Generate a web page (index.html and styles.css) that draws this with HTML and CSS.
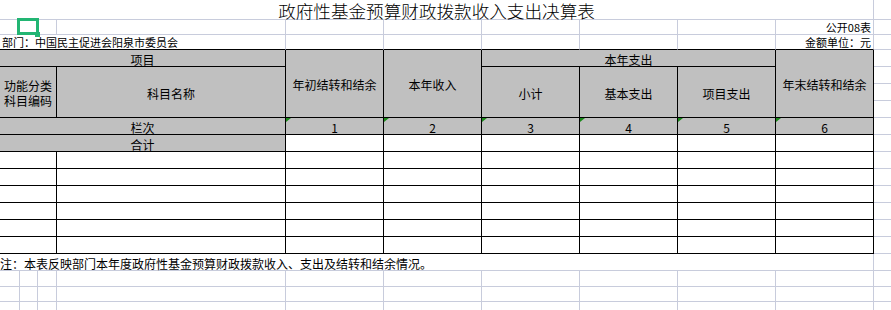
FILE: index.html
```html
<!DOCTYPE html>
<html lang="zh-CN">
<head>
<meta charset="utf-8">
<title>政府性基金预算财政拨款收入支出决算表</title>
<link rel="stylesheet" href="styles.css">
</head>
<body>
<div class="sheet">
  <!-- row 1 -->
  <div class="c title s10">政府性基金预算财政拨款收入支出决算表</div><div class="c edge"></div>
  <!-- row 2 -->
  <div class="c"></div>
  <div class="c sel"><span class="selbox"></span><span class="handle"></span></div>
  <div class="c"></div><div class="c"></div>
  <div class="c"></div><div class="c"></div><div class="c"></div><div class="c"></div><div class="c"></div>
  <div class="c small right">公开08表</div><div class="c edge"></div>
  <!-- row 3 -->
  <div class="c bb small left s4">部门：中国民主促进会阳泉市委员会</div>
  <div class="c bb"></div><div class="c bb"></div><div class="c bb"></div><div class="c bb"></div><div class="c bb"></div>
  <div class="c bb small right">金额单位：元</div><div class="c edge"></div>
  <!-- header row a -->
  <div class="c k g s4 pt">项目</div>
  <div class="c k g r4 pt">年初结转和结余</div>
  <div class="c k g r4 pt">本年收入</div>
  <div class="c k g s3 pt">本年支出</div>
  <div class="c k g r4 pt">年末结转和结余</div>
  <div class="c edge"></div>
  <!-- header row b -->
  <div class="c k g s3 r3 pt two"><span class="ln">功能分类</span><span class="ln">科目编码</span></div>
  <div class="c k g r3 pt">科目名称</div>
  <div class="c k g r3 pt">小计</div>
  <div class="c k g r3 pt">基本支出</div>
  <div class="c k g r3 pt">项目支出</div>
  <div class="c edge"></div>
  <div class="c edge"></div>
  <div class="c edge"></div>
  <!-- 栏次 -->
  <div class="c k g s4 pt">栏次</div>
  <div class="c k g pt tri">1</div><div class="c k g pt tri">2</div><div class="c k g pt tri">3</div>
  <div class="c k g pt tri">4</div><div class="c k g pt tri">5</div><div class="c k g pt tri">6</div>
  <div class="c edge"></div>
  <!-- 合计 -->
  <div class="c k g s4 pt">合计</div>
  <div class="c k"></div><div class="c k"></div><div class="c k"></div><div class="c k"></div><div class="c k"></div><div class="c k"></div>
  <div class="c edge"></div>
  <!-- data rows -->
  <div class="c k s3"></div><div class="c k"></div><div class="c k"></div><div class="c k"></div><div class="c k"></div><div class="c k"></div><div class="c k"></div><div class="c k"></div><div class="c edge"></div>
  <div class="c k s3"></div><div class="c k"></div><div class="c k"></div><div class="c k"></div><div class="c k"></div><div class="c k"></div><div class="c k"></div><div class="c k"></div><div class="c edge"></div>
  <div class="c k s3"></div><div class="c k"></div><div class="c k"></div><div class="c k"></div><div class="c k"></div><div class="c k"></div><div class="c k"></div><div class="c k"></div><div class="c edge"></div>
  <div class="c k s3"></div><div class="c k"></div><div class="c k"></div><div class="c k"></div><div class="c k"></div><div class="c k"></div><div class="c k"></div><div class="c k"></div><div class="c edge"></div>
  <div class="c k s3"></div><div class="c k"></div><div class="c k"></div><div class="c k"></div><div class="c k"></div><div class="c k"></div><div class="c k"></div><div class="c k"></div><div class="c edge"></div>
  <div class="c k s3"></div><div class="c k"></div><div class="c k"></div><div class="c k"></div><div class="c k"></div><div class="c k"></div><div class="c k"></div><div class="c k"></div><div class="c edge"></div>
  <!-- note -->
  <div class="c s10 note pt">注：本表反映部门本年度政府性基金预算财政拨款收入、支出及结转和结余情况。</div><div class="c edge"></div>
  <!-- empty rows -->
  <div class="c"></div><div class="c"></div><div class="c"></div><div class="c"></div><div class="c"></div><div class="c"></div><div class="c"></div><div class="c"></div><div class="c"></div><div class="c"></div><div class="c edge"></div>
  <div class="c"></div><div class="c"></div><div class="c"></div><div class="c"></div><div class="c"></div><div class="c"></div><div class="c"></div><div class="c"></div><div class="c"></div><div class="c"></div><div class="c edge"></div>
  <div class="c"></div><div class="c"></div><div class="c"></div><div class="c"></div><div class="c"></div><div class="c"></div><div class="c"></div><div class="c"></div><div class="c"></div><div class="c"></div><div class="c edge"></div>
</div>
</body>
</html>
```

FILE: styles.css
```css
* {
  box-sizing: border-box;
  margin: 0;
  padding: 0;
}

html, body {
  background: #ffffff;
  overflow: hidden;
}

body {
  margin: 0;
  font-family: "Noto Sans CJK SC", "Noto Sans", sans-serif;
  color: #000000;
}

.sheet {
  display: grid;
  grid-template-columns: 20px 18px 19px 229px repeat(6, 98px) 17px;
  grid-template-rows: 20px 15px 15px repeat(13, 17px) 16px 15px 9px;
  width: 891px;
}

.c {
  border-right: 1px solid #c8ccdc;
  border-bottom: 1px solid #c8ccdc;
  display: flex;
  align-items: center;
  justify-content: center;
  font-size: 12px;
  line-height: 12px;
  white-space: nowrap;
  min-width: 0;
  min-height: 0;
  position: relative;
}

.edge {
  border-right: none;
}

.bb {
  border-bottom-color: #000000;
}

.k {
  border-right-color: #000000;
  border-bottom-color: #000000;
}

.g {
  background: #c0c0c0;
}

.pt {
  padding-top: 3px;
}

.s3 { grid-column: span 3; }
.s4 { grid-column: span 4; }
.s10 { grid-column: span 10; }
.r3 { grid-row: span 3; }
.r4 { grid-row: span 4; }

.title {
  font-size: 17.6px;
  line-height: 19px;
  font-weight: 300;
  padding-top: 1px;
}

.small {
  font-size: 11px;
  line-height: 11px;
  align-items: flex-end;
  padding-bottom: 1px;
}

.small.right {
  justify-content: flex-end;
  padding-right: 2px;
}

.small.left {
  justify-content: flex-start;
  padding-left: 2px;
}

.two {
  flex-direction: column;
  gap: 3px;
}

.ln {
  display: block;
  line-height: 12px;
}

.note {
  justify-content: flex-start;
  padding-left: 0;
}

.tri::before {
  content: "";
  position: absolute;
  left: 0;
  top: 0;
  width: 0;
  height: 0;
  border-top: 4px solid #1a8a1a;
  border-right: 5px solid transparent;
}

.sel {
  z-index: 2;
}

.selbox {
  position: absolute;
  left: -3px;
  top: -2px;
  width: 22px;
  height: 17px;
  border: 3px solid #22b573;
}

.handle {
  position: absolute;
  left: 15px;
  top: 12px;
  width: 5px;
  height: 5px;
  background: #22b573;
}
```
